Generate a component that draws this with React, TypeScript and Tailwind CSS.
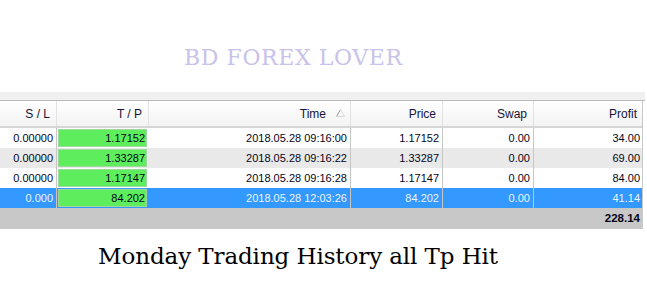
import React from 'react';

const cols = 'grid grid-cols-[57px_92px_202px_92px_91px_109px]';

const rows = [
  { sl: '0.00000', tp: '1.17152', time: '2018.05.28 09:16:00', price: '1.17152', swap: '0.00', profit: '34.00', bg: 'bg-white', text: 'text-[#05051a]' },
  { sl: '0.00000', tp: '1.33287', time: '2018.05.28 09:16:22', price: '1.33287', swap: '0.00', profit: '69.00', bg: 'bg-[#e9e9e9]', text: 'text-[#05051a]' },
  { sl: '0.00000', tp: '1.17147', time: '2018.05.28 09:16:28', price: '1.17147', swap: '0.00', profit: '84.00', bg: 'bg-white', text: 'text-[#05051a]' },
  { sl: '0.000', tp: '84.202', time: '2018.05.28 12:03:26', price: '84.202', swap: '0.00', profit: '41.14', bg: 'bg-[#3399ff]', text: 'text-[#eef4ff]' },
];

function SortArrow() {
  return (
    <svg width="9" height="8" viewBox="0 0 9 8" className="mb-[1px]">
      <path d="M4.5 0.5 L0.5 7.5" stroke="#9a9a9a" strokeWidth="1" fill="none" />
      <path d="M4.5 0.5 L8.5 7.5 L0.5 7.5" stroke="#d8d8d8" strokeWidth="1" fill="none" />
    </svg>
  );
}

export default function App() {
  const headers = ['S / L', 'T / P', 'Time', 'Price', 'Swap', 'Profit'];

  return (
    <div className="w-[647px] h-[287px] bg-white overflow-hidden" style={{ fontFamily: '"Liberation Sans", Arial, sans-serif' }}>
      <div className="pt-[47px] pl-[184px]">
        <div className="text-[22px] leading-[22px] tracking-[0.6px] text-[#c9c2ea]" style={{ fontFamily: '"DejaVu Serif", "Liberation Serif", serif' }}>
          BD FOREX LOVER
        </div>
      </div>

      <div className="mt-[23px] w-[645px]">
        <div className="h-[9px] bg-[#f0f0f0] border-b border-[#b9b9b9]" />
        <div className="w-[643px] border-r border-[#c8c8c8]">
          <div className={`${cols} h-[27px] bg-linear-to-b from-white to-[#f3f3f3] border-b-2 border-[#d6d6d6] text-[12px] text-[#14143a]`}>
            {headers.map((h) => (
              <div key={h} className={`flex items-center justify-end gap-[10px] border-r border-[#e2e2e2] last:border-r-0 ${h === 'Time' ? 'pr-[5px]' : 'pr-[6px]'}`}>
                <span>{h}</span>
                {h === 'Time' && <SortArrow />}
              </div>
            ))}
          </div>

          {rows.map((r) => (
            <div key={r.time} className={`${cols} h-[20px] text-[11px] ${r.bg} ${r.text}`}>
              <div className="flex items-center justify-end pr-[3px] border-r border-[#c6c6c6]">{r.sl}</div>
              <div className="flex items-center justify-end pr-[2px] m-[1px] mr-[2px] bg-[#5ded5d] shadow-[inset_0_0_0_1px_#9fd89f] text-[#05051a]">{r.tp}</div>
              <div className="flex items-center justify-end pr-[3px] border-r border-[#c6c6c6]">{r.time}</div>
              <div className="flex items-center justify-end pr-[3px] border-r border-[#c6c6c6]">{r.price}</div>
              <div className="flex items-center justify-end pr-[3px] border-r border-[#c6c6c6]">{r.swap}</div>
              <div className="flex items-center justify-end pr-[3px]">{r.profit}</div>
            </div>
          ))}

          <div className={`${cols} h-[21px] bg-[#c8c8c8] text-[11.5px] text-[#05051a]`}>
            <div className="col-span-5" />
            <div className="flex items-center justify-end pr-[3px] font-bold">228.14</div>
          </div>
        </div>
      </div>

      <div className="mt-[16px] pl-[98px]">
        <div className="text-[23px] leading-[23px] tracking-[-0.1px] text-black" style={{ fontFamily: '"DejaVu Serif", "Liberation Serif", serif' }}>
          Monday Trading History all Tp Hit
        </div>
      </div>
    </div>
  );
}
